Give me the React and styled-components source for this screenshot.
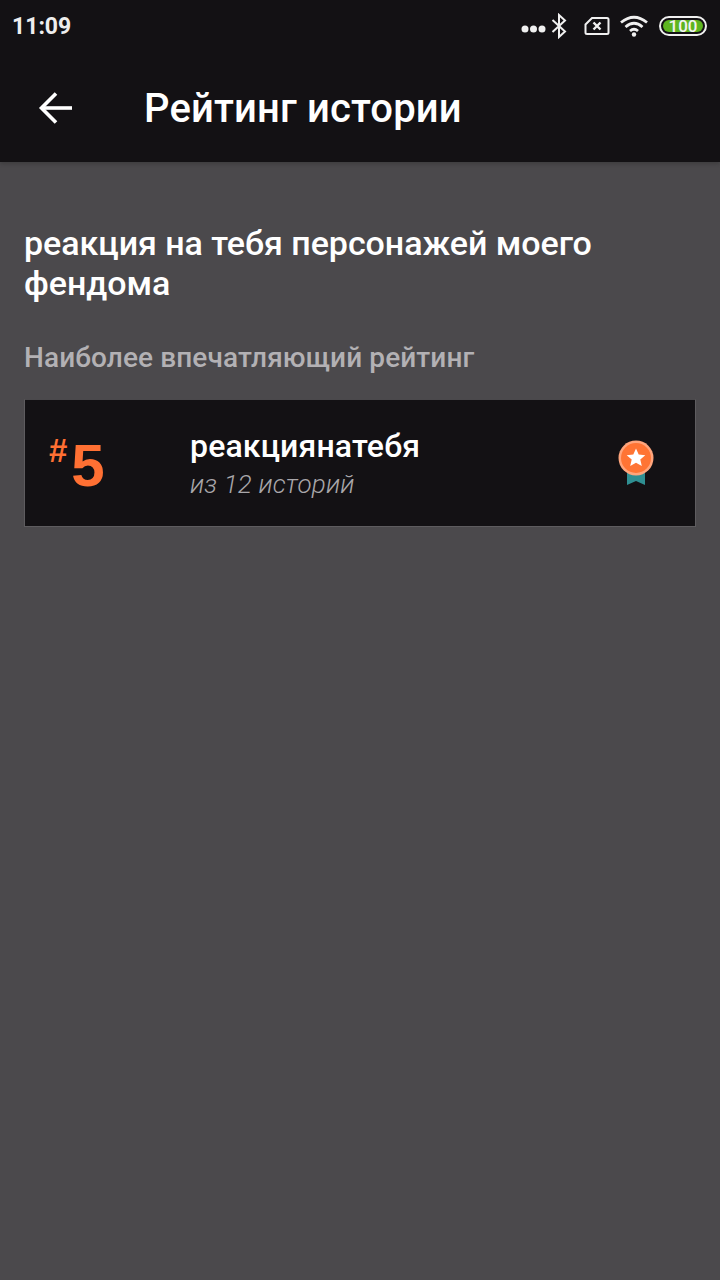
import styled, { createGlobalStyle } from 'styled-components'

const Global = createGlobalStyle`
  html, body {
    margin: 0;
    padding: 0;
    background: #4b494c;
  }
  * {
    box-sizing: border-box;
  }
`

const Page = styled.div`
  width: 720px;
  height: 1280px;
  background: #4b494c;
  font-family: Roboto, "Noto Sans", sans-serif;
  display: flex;
  flex-direction: column;
  overflow: hidden;
`

const Header = styled.header`
  background: #131114;
  height: 162px;
  flex: none;
  box-shadow: 0 2px 4px rgba(0, 0, 0, 0.18);
`

const StatusBar = styled.div`
  height: 54px;
  padding: 0 13px 2px 12px;
  display: flex;
  align-items: center;
  justify-content: space-between;
`

const Time = styled.span`
  color: #eeeeee;
  font-size: 23px;
  font-weight: 700;
`

const StatusIcons = styled.div`
  display: flex;
  align-items: center;
`

const Toolbar = styled.div`
  height: 108px;
  display: flex;
  align-items: center;
  padding: 0 0 0 38px;
`

const BackButton = styled.div`
  width: 106px;
  display: flex;
  align-items: center;
`

const Title = styled.h1`
  margin: 0;
  color: #ffffff;
  font-size: 40px;
  font-weight: 500;
  letter-spacing: 0.15px;
`

const Content = styled.main`
  padding: 61px 24px 0 24px;
`

const StoryName = styled.h2`
  margin: 0;
  color: #ffffff;
  font-size: 34px;
  line-height: 40px;
  font-weight: 500;
  letter-spacing: -0.05px;
`

const SectionLabel = styled.div`
  margin-top: 37px;
  color: #b3b1b4;
  font-size: 28px;
  line-height: 36px;
  font-weight: 500;
  letter-spacing: 0.1px;
`

const RankCard = styled.div`
  margin-top: 23px;
  height: 128px;
  background: #131114;
  border: 1px solid #5e5c5f;
  border-top-color: #4a484b;
  display: flex;
  align-items: center;
  padding: 0 41px 0 24px;
`

const Rank = styled.div`
  width: 141px;
  flex: none;
  display: flex;
  align-items: flex-start;
  color: #ff7033;
  font-family: "Liberation Sans", Arial, sans-serif;
  font-weight: 700;
  height: 64px;
`

const Hash = styled.span`
  font-size: 33px;
  line-height: 36px;
  margin-top: 2px;
`

const RankNumber = styled.span`
  font-size: 60px;
  line-height: 64px;
  margin-top: 3px;
  margin-left: 4px;
`

const Info = styled.div`
  flex: 1;
  display: flex;
  flex-direction: column;
  padding-top: 4px;
`

const Tag = styled.div`
  color: #ffffff;
  font-size: 32px;
  line-height: 38px;
  font-weight: 500;
  letter-spacing: 0.15px;
`

const Count = styled.div`
  color: #a9a7aa;
  font-size: 26px;
  line-height: 38px;
  font-style: italic;
  font-weight: 300;
  letter-spacing: 0.15px;
`

const BatteryIcon = () => (
  <svg width="48" height="20" viewBox="0 0 48 20">
    <rect x="1" y="1" width="46" height="18" rx="9" fill="none" stroke="#f0f0f0" strokeWidth="2" />
    <rect x="4" y="4" width="40" height="12" rx="6" fill="#5db51f" />
    <text x="24" y="16" textAnchor="middle" fontFamily="Roboto, sans-serif" fontSize="17" fontWeight="500" fill="#f2f2f2">100</text>
  </svg>
)

const StatusGlyphs = () => (
  <>
    <svg width="26" height="12" viewBox="0 0 26 12" style={{ marginTop: 6 }}>
      <circle cx="5" cy="6" r="3.5" fill="#f0f0f0" />
      <circle cx="13.5" cy="6" r="3.5" fill="#f0f0f0" />
      <circle cx="22" cy="6" r="3.5" fill="#f0f0f0" />
    </svg>
    <svg width="16" height="26" viewBox="0 0 16 26" fill="none" stroke="#f0f0f0" strokeWidth="2" style={{ marginLeft: 5 }}>
      <path d="M1.5 7 L14 18.5 L8 24 V2 L14 7.5 L1.5 19" />
    </svg>
    <svg width="26" height="20" viewBox="0 0 26 20" fill="none" stroke="#f0f0f0" strokeWidth="2" style={{ marginLeft: 17 }}>
      <path d="M8 2 H23 Q24.5 2 24.5 3.5 V16.5 Q24.5 18 23 18 H3 Q1.5 18 1.5 16.5 V8.5 Z" />
      <path d="M9.5 6.5 L16.5 13.5 M16.5 6.5 L9.5 13.5" strokeWidth="2.4" />
    </svg>
    <svg width="30" height="22" viewBox="0 0 30 22" fill="none" stroke="#f0f0f0" strokeWidth="2.8" style={{ marginLeft: 9 }}>
      <path d="M2 7.5 Q15 -3 28 7.5" />
      <path d="M6.5 12 Q15 4.5 23.5 12" />
      <path d="M11 16 Q15 12.5 19 16" />
      <circle cx="15" cy="19.5" r="2.2" fill="#f0f0f0" stroke="none" />
    </svg>
    <div style={{ width: 10 }} />
    <BatteryIcon />
  </>
)

const BackArrow = () => (
  <svg width="36" height="34" viewBox="0 0 36 34" fill="none" stroke="#ffffff" strokeWidth="3.6">
    <path d="M34 17 H4" />
    <path d="M18 2.5 L3.5 17 L18 31.5" />
  </svg>
)

const Medal = () => (
  <svg width="36" height="46" viewBox="0 0 36 46">
    <path d="M9 28 H27 V45 L18 41 L9 45 Z" fill="#2f8f92" />
    <circle cx="18" cy="18" r="17.5" fill="#ffa57c" />
    <circle cx="18" cy="18" r="15" fill="#ff7434" />
    <path d="M18 8.5 L20.7 14.6 L27.3 15.2 L22.3 19.6 L23.8 26 L18 22.7 L12.2 26 L13.7 19.6 L8.7 15.2 L15.3 14.6 Z" fill="#ffffff" />
  </svg>
)

export default function App() {
  return (
    <Page>
      <Global />
      <Header>
        <StatusBar>
          <Time>11:09</Time>
          <StatusIcons>
            <StatusGlyphs />
          </StatusIcons>
        </StatusBar>
        <Toolbar>
          <BackButton>
            <BackArrow />
          </BackButton>
          <Title>Рейтинг истории</Title>
        </Toolbar>
      </Header>
      <Content>
        <StoryName>реакция на тебя персонажей моего фендома</StoryName>
        <SectionLabel>Наиболее впечатляющий рейтинг</SectionLabel>
        <RankCard>
          <Rank>
            <Hash>#</Hash>
            <RankNumber>5</RankNumber>
          </Rank>
          <Info>
            <Tag>реакциянатебя</Tag>
            <Count>из 12 историй</Count>
          </Info>
          <Medal />
        </RankCard>
      </Content>
    </Page>
  )
}
